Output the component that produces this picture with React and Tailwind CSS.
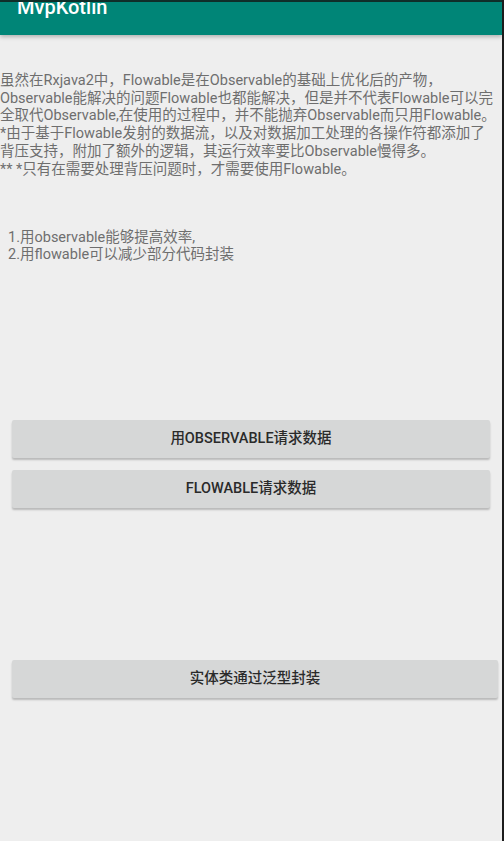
import React from "react";

const intro = [
    "虽然在Rxjava2中，Flowable是在Observable的基础上优化后的产物，",
    "Observable能解决的问题Flowable也都能解决，但是并不代表Flowable可以完",
    "全取代Observable,在使用的过程中，并不能抛弃Observable而只用Flowable。",
    "*由于基于Flowable发射的数据流，以及对数据加工处理的各操作符都添加了",
    "背压支持，附加了额外的逻辑，其运行效率要比Observable慢得多。",
    "** *只有在需要处理背压问题时，才需要使用Flowable。",
];

const tips = ["1.用observable能够提高效率,", "2.用flowable可以减少部分代码封装"];

function AndroidButton({ label, className }) {
    return (
        <button
            className={
                "h-[38px] rounded-[2px] bg-[#d6d7d7] text-[14.5px] font-medium text-[#2a2a2a] shadow-[0_2px_2px_rgba(0,0,0,0.22)] " +
                className
            }
        >
            {label}
        </button>
    );
}

function App() {
    return (
        <div
            className="flex min-h-[841px] w-full bg-[#eeeeee]"
            style={{ fontFamily: "Roboto, 'Noto Sans CJK SC', sans-serif" }}
        >
            <div className="flex min-w-0 flex-1 flex-col overflow-hidden">
                <div className="h-[2px] bg-[#10302b]" />
                <header className="relative h-[33px] overflow-hidden bg-[#008577] shadow-[0_2px_4px_rgba(0,0,0,0.25)]">
                    <h1 className="mt-[-5px] pl-[17px] text-[20px] font-medium leading-[20px] text-white">
                        MvpKotlin
                    </h1>
                </header>

                {/* intro text */}
                <div className="mt-[37px] text-[14.5px] leading-[17.7px] text-[#6e6e6e]">
                    {intro.map((line) => (
                        <p key={line} className="whitespace-nowrap">
                            {line}
                        </p>
                    ))}
                </div>

                <div className="mt-[51px] pl-[8px] text-[14.5px] leading-[17px] text-[#6e6e6e]">
                    {tips.map((line) => (
                        <p key={line} className="whitespace-nowrap">
                            {line}
                        </p>
                    ))}
                </div>

                <div className="mt-[157px] flex flex-col gap-[12px] pl-[12px] pr-[12px]">
                    <AndroidButton label="用OBSERVABLE请求数据" />
                    <AndroidButton label="FLOWABLE请求数据" />
                </div>

                <div className="mt-[152px] flex flex-col pl-[12px] pr-[4px]">
                    <AndroidButton label="实体类通过泛型封装" />
                </div>
            </div>
            <div className="w-[2px] shrink-0 bg-[#1c1c1c]" />
        </div>
    );
}

export default App;
